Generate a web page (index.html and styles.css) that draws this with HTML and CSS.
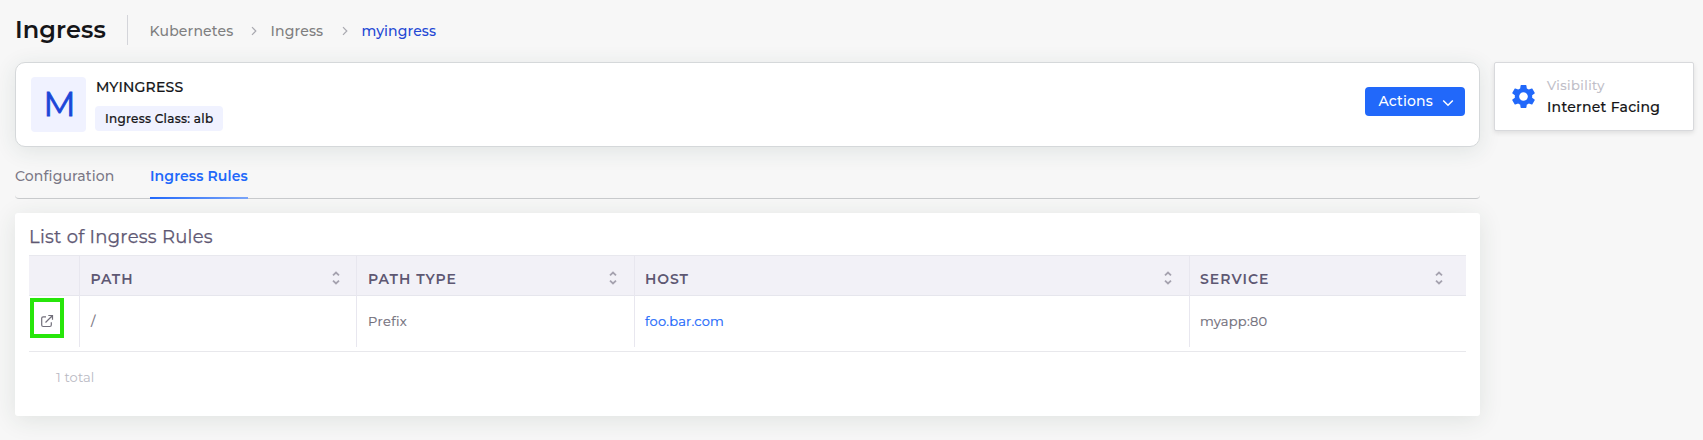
FILE: index.html
```html
<!DOCTYPE html>
<html lang="en">
<head>
<meta charset="utf-8">
<title>Ingress</title>
<link rel="stylesheet" href="styles.css">
</head>
<body>
<svg class="defs" width="0" height="0" aria-hidden="true">
  <symbol id="sort" viewBox="0 0 8 14"><path d="M1 4.3 4 1.5 7 4.3M1 9.7 4 12.5 7 9.7"/></symbol>
  <symbol id="chevron" viewBox="0 0 6 10"><path d="M1 1.2 4.8 5 1 8.8"/></symbol>
</svg>
<header class="topbar">
  <h1 class="title"><span>Ingress</span></h1>
  <nav class="crumbs">
    <a class="crumb crumb-root">Kubernetes</a>
    <svg class="crumb-sep"><use href="#chevron"/></svg>
    <a class="crumb crumb-mid">Ingress</a>
    <svg class="crumb-sep"><use href="#chevron"/></svg>
    <a class="crumb crumb-current">myingress</a>
  </nav>
</header>
<div class="layout">
  <main class="main">
    <section class="card">
      <div class="avatar">M</div>
      <div class="info">
        <div class="name">MYINGRESS</div>
        <div class="badge">Ingress Class: alb</div>
      </div>
      <button class="actions"><span>Actions</span><svg width="12" height="8" viewBox="0 0 12 8"><path d="M1.2 1.5 6 6.3 10.8 1.5"/></svg></button>
    </section>
    <nav class="tabs">
      <a class="tab">Configuration</a>
      <a class="tab tab-active">Ingress Rules</a>
    </nav>
    <section class="panel">
      <h2 class="panel-title">List of Ingress Rules</h2>
      <div class="table">
        <div class="row head">
          <div class="cell"></div>
          <div class="cell"><span class="h-path">PATH</span><svg class="sort"><use href="#sort"/></svg></div>
          <div class="cell"><span class="h-type">PATH TYPE</span><svg class="sort"><use href="#sort"/></svg></div>
          <div class="cell"><span class="h-host">HOST</span><svg class="sort"><use href="#sort"/></svg></div>
          <div class="cell"><span class="h-service">SERVICE</span><svg class="sort"><use href="#sort"/></svg></div>
        </div>
        <div class="row body">
          <div class="cell cell-open"><a class="open"><svg width="14" height="14" viewBox="0 0 14 14"><path d="M6 2.8H3.2Q1.7 2.8 1.7 4.3V11Q1.7 12.5 3.2 12.5H9.8Q11.3 12.5 11.3 11V8.2M5.5 8.5 12.5 1.5M8.3 1.5H12.5V5.7"/></svg></a></div>
          <div class="cell">/</div>
          <div class="cell"><span class="v-prefix">Prefix</span></div>
          <div class="cell"><a class="link">foo.bar.com</a></div>
          <div class="cell"><span class="v-service">myapp:80</span></div>
        </div>
      </div>
      <div class="total">1 total</div>
    </section>
  </main>
  <aside class="side">
    <svg class="gear" width="29" height="29" viewBox="0 0 24 24"><path d="M19.14 12.94c.04-.3.06-.61.06-.94 0-.32-.02-.64-.07-.94l2.03-1.58c.18-.14.23-.41.12-.61l-1.92-3.32c-.12-.22-.37-.29-.59-.22l-2.39.96c-.5-.38-1.03-.7-1.62-.94l-.36-2.54c-.04-.24-.24-.41-.48-.41h-3.84c-.24 0-.43.17-.47.41l-.36 2.54c-.59.24-1.13.57-1.62.94l-2.39-.96c-.22-.08-.47 0-.59.22L2.74 8.87c-.12.21-.08.47.12.61l2.03 1.58c-.05.3-.09.63-.09.94s.02.64.07.94l-2.03 1.58c-.18.14-.23.41-.12.61l1.92 3.32c.12.22.37.29.59.22l2.39-.96c.5.38 1.03.7 1.62.94l.36 2.54c.05.24.24.41.48.41h3.84c.24 0 .44-.17.47-.41l.36-2.54c.59-.24 1.13-.56 1.62-.94l2.39.96c.22.08.47 0 .59-.22l1.92-3.32c.12-.22.07-.47-.12-.61l-2.01-1.58zM12 15.6c-1.98 0-3.6-1.62-3.6-3.6s1.62-3.6 3.6-3.6 3.6 1.62 3.6 3.6-1.62 3.6-3.6 3.6z"/></svg>
    <div class="side-text">
      <div class="side-label">Visibility</div>
      <div class="side-value">Internet Facing</div>
    </div>
  </aside>
</div>
</body>
</html>
```

FILE: styles.css
```css
* { box-sizing: border-box; }
body {
  margin: 0;
  height: 440px;
  overflow: hidden;
  background: #f7f7f7;
  font-family: Montserrat, Inter, "Open Sans", sans-serif;
  font-size: 14px;
  color: #151518;
  white-space: nowrap;
}
.defs { position: absolute; }
.topbar { display: flex; height: 62px; padding: 15px 15px 0; }
.title {
  width: 113px;
  height: 30px;
  margin: 0;
  border-right: 1px solid #d4d5da;
  font-size: 24px;
  line-height: 30px;
  font-weight: 600;
  letter-spacing: 0.1px;
}
.crumbs { display: flex; align-items: center; height: 32px; padding-left: 21.5px; color: #7f7f80; font-weight: 500; }
.crumb-root { width: 101px; letter-spacing: 0.17px; }
.crumb-sep { width: 6px; height: 10px; fill: none; stroke: #a9a9b0; stroke-width: 1.2; }
.crumb-mid { width: 71px; margin-left: 14px; letter-spacing: 0.15px; }
.crumb-current { margin-left: 14px; color: #2348d4; letter-spacing: 0.1px; }
.layout { display: flex; align-items: flex-start; gap: 14px; padding-left: 15px; }
.main { width: 1465px; }
.card {
  display: flex;
  height: 85px;
  padding: 14px 14px 0 15px;
  background: #fff;
  border: 1px solid #d5d8da;
  border-radius: 10px;
  box-shadow: 0 4px 22px rgba(40, 70, 60, 0.11);
}
.avatar {
  width: 55px;
  height: 55px;
  padding-left: 2px;
  border-radius: 4px;
  background: #f0f2ff;
  color: #1c46d8;
  font-size: 34px;
  line-height: 54px;
  text-align: center;
  -webkit-text-stroke: 0.8px;
}
.info { flex: 1; padding-left: 9px; font-weight: 500; -webkit-text-stroke: 0.2px; }
.name { padding-left: 1px; line-height: 20px; letter-spacing: 0.2px; }
.badge {
  width: 128px;
  height: 25px;
  margin-top: 9px;
  padding-left: 10px;
  border-radius: 4px;
  background: #f0f2ff;
  font-size: 12px;
  line-height: 26px;
  letter-spacing: 0.28px;
}
.actions {
  display: flex;
  align-items: center;
  gap: 9px;
  width: 100px;
  height: 29px;
  margin-top: 10px;
  padding: 0 0 0 13.5px;
  border: 0;
  border-radius: 4px;
  background: #2168fa;
  color: #fff;
  font: 500 14px Montserrat, Inter, sans-serif;
  letter-spacing: 0.13px;
}
.actions svg { margin-top: 2px; fill: none; stroke: #fff; stroke-width: 1.5; }
.actions span { margin-top: -1px; }
.tabs {
  display: flex;
  gap: 36px;
  height: 52px;
  border-bottom: 1px solid #c9cbcd;
  border-radius: 4px;
  line-height: 20px;
  color: #7b7886;
}
.tab { width: 99px; height: 52px; padding-top: 19px; font-weight: 500; letter-spacing: 0.14px; }
.tab-active {
  width: 98px;
  color: #2168fa;
  font-weight: 600;
  letter-spacing: 0.12px;
  border-bottom: 2px solid;
  border-image: linear-gradient(90deg, #2168fa, #7ba5f8) 1;
}
.panel {
  height: 203px;
  margin-top: 14px;
  padding: 14px 14px 0;
  background: #fff;
  border-radius: 3px;
  box-shadow: 0 4px 24px rgba(40, 60, 50, 0.11);
}
.panel-title { height: 28px; margin: 0; font-size: 18px; line-height: 20px; font-weight: 400; color: #5e5873; letter-spacing: 0.28px; -webkit-text-stroke: 0.25px; }
.row { display: grid; grid-template-columns: 51px 277px 278px 555px 276px; }
.cell { display: flex; justify-content: space-between; padding-left: 11px; border-right: 1px solid #e8e7ef; }
.cell:nth-child(n+4) { padding-left: 10px; }
.cell:last-child { border-right: 0; }
.head {
  height: 41px;
  border-top: 1px solid #e8e8ee;
  border-bottom: 1px solid #e6e6ed;
  background: #f2f1f7;
  color: #5e5873;
  font-weight: 600;
  line-height: 46px;
}
.head .cell:nth-child(2) { padding-left: 10.5px; }
.h-path { letter-spacing: 0.9px; }
.h-type { letter-spacing: 1px; }
.h-host { letter-spacing: 0.9px; }
.h-service { letter-spacing: 1px; }
.sort { width: 8px; height: 14px; margin: 15px 16px 0 0; fill: none; stroke: #a5a2af; stroke-width: 1.8; }
.cell:nth-child(3) .sort { margin-right: 17px; }
.cell:nth-child(4) .sort { margin-right: 17px; }
.cell:last-child .sort { margin-right: 23px; }
.body { height: 56px; padding-bottom: 4px; border-bottom: 1px solid #e8e8ec; color: #716e7a; font-size: 13px; line-height: 51px; -webkit-text-stroke: 0.2px; }
.body .cell-open { padding: 2px 0 0 1px; }
.open { display: flex; align-items: center; justify-content: center; width: 34px; height: 40px; padding-top: 5px; border: 4px solid #27e60a; }
.open svg { fill: none; stroke: #716e7a; stroke-width: 1.2; }
.v-prefix { letter-spacing: 0.4px; }
.v-service { letter-spacing: 0.25px; }
.link { color: #2168fa; letter-spacing: 0.25px; }
.total { padding: 15px 0 0 27px; color: #b9b9c3; font-size: 13px; line-height: 20px; letter-spacing: 0.15px; }
.side {
  display: flex;
  width: 200px;
  height: 69px;
  padding: 14px 0 0 13.5px;
  background: #fff;
  border: 1px solid #d8d9dc;
  border-radius: 2px;
  box-shadow: 0 2px 5px rgba(0, 0, 0, 0.1);
}
.gear { margin-top: 5px; fill: #2168fa; }
.side-text { padding-left: 9.5px; }
.side-label { color: #bcbbc5; font-size: 13px; line-height: 17px; letter-spacing: 0.45px; -webkit-text-stroke: 0.2px; }
.side-value { margin-top: 4px; line-height: 18px; font-weight: 500; letter-spacing: 0.26px; -webkit-text-stroke: 0.15px; }
```
